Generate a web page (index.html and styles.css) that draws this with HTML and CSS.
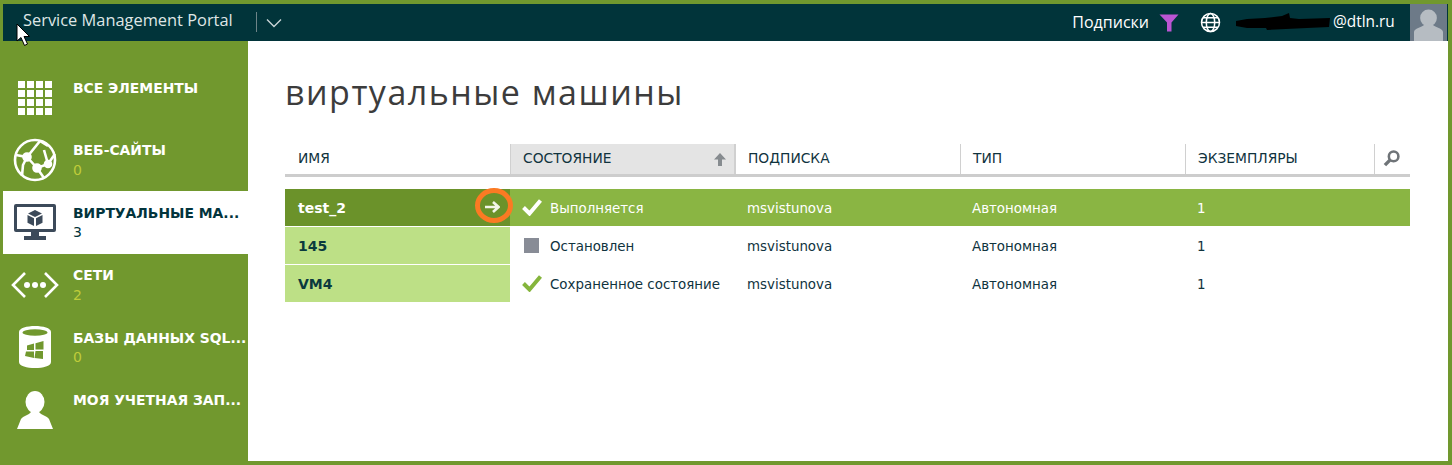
FILE: index.html
```html
<!DOCTYPE html>
<html lang="ru">
<head>
<meta charset="utf-8">
<title>Service Management Portal</title>
<link rel="stylesheet" href="styles.css">
</head>
<body>
<div class="shell">
  <header class="topbar">
    <div class="brand">Service Management Portal</div>
    <div class="brand-sep"></div>
    <svg class="chevron" width="16" height="10" viewBox="0 0 16 10"><path d="M1 1.500 8 8.500 15 1.500" fill="none" stroke="#c9d4d6" stroke-width="1.400"/></svg>
    <div class="top-right">
      <span class="subs">Подписки</span>
      <svg class="funnel" width="20" height="20" viewBox="0 0 20 20"><path d="M0.500 2.500H19.500L12.500 10.500V19.500H8V10.500Z" fill="#bb55d3"/></svg>
      <svg class="globe" width="21" height="21" viewBox="0 0 21 21" fill="none" stroke="#fff" stroke-width="1.500"><circle cx="10.500" cy="10.500" r="9"/><ellipse cx="10.500" cy="10.500" rx="4.200" ry="9"/><path d="M1.500 10.500H19.500M3 5.800H18M3 15.200H18"/></svg>
      <span class="account">
        <svg class="redact" width="96" height="22" viewBox="0 0 96 22"><path d="M1 9 12 7 30 6 47 4 54 1 55 6 64 7 95 6 94 15 72 16 32 18 31 16 12 16 1 14Z" fill="#000"/></svg>
        <span class="mail">@dtln.ru</span>
      </span>
      <div class="avatar">
        <svg width="37" height="37" viewBox="0 0 37 37"><rect width="37" height="37" fill="#6d7a88"/><circle cx="18.500" cy="14" r="8.400" fill="#b6bcc2"/><path d="M4 37V28C4 24.500 12 23 14 21H23C25 23 33 24.500 33 28V37Z" fill="#b6bcc2"/></svg>
      </div>
    </div>
  </header>
  <div class="main">
    <nav class="sidebar">
      <a class="nav-item">
        <span class="nav-icon">
          <svg width="34" height="34" viewBox="0 0 34 34" fill="#fff"><path d="M0 0h7v7H0zM9 0h7v7H9zM18 0h7v7h-7zM27 0h7v7h-7zM0 9h7v7H0zM9 9h7v7H9zM18 9h7v7h-7zM27 9h7v7h-7zM0 18h7v7H0zM9 18h7v7H9zM18 18h7v7h-7zM27 18h7v7h-7zM0 27h7v7H0zM9 27h7v7H9zM18 27h7v7h-7zM27 27h7v7h-7z"/></svg>
        </span>
        <span class="nav-text"><span class="nav-title">ВСЕ ЭЛЕМЕНТЫ</span></span>
      </a>
      <a class="nav-item">
        <span class="nav-icon">
          <svg width="44" height="44" viewBox="0 0 44 44" fill="none" stroke="#fff" stroke-width="2.600"><circle cx="22" cy="22" r="20"/><path d="M3 17 14 19 27 3M14 19 24 30 31 40M24 30 35 26 42 16M27 3 35 8M9 38 10 27 14 19M35 26 31 12"/><circle cx="14" cy="19" r="3.500" fill="#fff"/><circle cx="24" cy="30" r="3.500" fill="#fff"/><circle cx="35" cy="26" r="3" fill="#fff"/></svg>
        </span>
        <span class="nav-text"><span class="nav-title">ВЕБ-САЙТЫ</span><span class="nav-count">0</span></span>
      </a>
      <a class="nav-item is-active">
        <span class="nav-icon">
          <svg width="42" height="36" viewBox="0 0 42 36"><path d="M2 0H40A2 2 0 0 1 42 2V26A2 2 0 0 1 40 28H2A2 2 0 0 1 0 26V2A2 2 0 0 1 2 0ZM3 3V25H39V3Z" fill="#3c4a5a" fill-rule="evenodd"/><path d="M17 28H25V32H32V36H10V32H17Z" fill="#3c4a5a"/><path d="M21 6 28 9.500 21 13 14 9.500ZM13.500 11 20 14.300V22L13.500 18.700ZM28.500 11V18.700L22 22V14.300Z" fill="#3c4a5a"/></svg>
        </span>
        <span class="nav-text"><span class="nav-title">ВИРТУАЛЬНЫЕ МА...</span><span class="nav-count">3</span></span>
      </a>
      <a class="nav-item">
        <span class="nav-icon">
          <svg width="48" height="28" viewBox="0 0 48 28"><path d="M14 2 2 14 14 26M34 2 46 14 34 26" fill="none" stroke="#fff" stroke-width="2.600"/><circle cx="16" cy="14" r="3" fill="#fff"/><circle cx="24" cy="14" r="3" fill="#fff"/><circle cx="32" cy="14" r="3" fill="#fff"/></svg>
        </span>
        <span class="nav-text"><span class="nav-title">СЕТИ</span><span class="nav-count">2</span></span>
      </a>
      <a class="nav-item">
        <span class="nav-icon">
          <svg width="32" height="42" viewBox="0 0 32 42"><path d="M0 6C0 2 8 0 16 0S32 2 32 6V36C32 40 24 42 16 42S0 40 0 36Z" fill="#fff"/><ellipse cx="16" cy="6.500" rx="12.500" ry="3.200" fill="#71982e"/><path d="M8 19.500 15 17.500V24H8ZM16.500 17.200 24.500 15V23.500H16.500ZM7 25.500H15V32L6 30ZM16.500 25H24V33L15.500 32Z" fill="#71982e"/></svg>
        </span>
        <span class="nav-text"><span class="nav-title">БАЗЫ ДАННЫХ SQL...</span><span class="nav-count">0</span></span>
      </a>
      <a class="nav-item">
        <span class="nav-icon">
          <svg width="36" height="38" viewBox="0 0 36 38"><ellipse cx="18" cy="11" rx="9.500" ry="11" fill="#fff"/><path d="M0 38 4 28C6 25 12 24 14 21H22C24 24 30 25 32 28L36 38Z" fill="#fff"/></svg>
        </span>
        <span class="nav-text"><span class="nav-title">МОЯ УЧЕТНАЯ ЗАП...</span></span>
      </a>
    </nav>
    <main class="content">
      <h1 class="page-title">виртуальные машины</h1>
      <div class="grid-head">
        <div class="hcell">ИМЯ</div>
        <div class="hcell is-sorted">СОСТОЯНИЕ
          <svg class="sort-arrow" width="12" height="13" viewBox="0 0 12 13"><path d="M6 0 12 6.500H8V13H4V6.500H0Z" fill="#868b8f"/></svg>
        </div>
        <div class="hcell">ПОДПИСКА</div>
        <div class="hcell">ТИП</div>
        <div class="hcell hcell-last">ЭКЗЕМПЛЯРЫ</div>
        <div class="hsearch">
          <svg width="17" height="17" viewBox="0 0 16 16" fill="none"><circle cx="10" cy="6" r="4.500" stroke="#6f7478" stroke-width="2.400"/><path d="M6.500 9.500 1.800 14.200" stroke="#6f7478" stroke-width="3.200"/></svg>
        </div>
      </div>
      <div class="rows">
        <div class="row is-selected">
          <div class="cell-name">test_2<span class="go-arrow"><svg width="16" height="12" viewBox="0 0 16 12"><path d="M1 6H14M9 1 14.500 6 9 11" fill="none" stroke="#f2f5e8" stroke-width="2.600"/></svg></span><span class="ring"></span></div>
          <div class="cell cell-status"><svg class="status-icon" width="20" height="17" viewBox="0 0 20 17"><path d="M1.500 8.500 7.500 14.500 18.500 1.500" fill="none" stroke="#fff" stroke-width="4"/></svg><span class="cell-label">Выполняется</span></div>
          <div class="cell"><span class="cell-label">msvistunova</span></div>
          <div class="cell"><span class="cell-label">Автономная</span></div>
          <div class="cell"><span class="cell-label">1</span></div>
        </div>
        <div class="row">
          <div class="cell-name">145</div>
          <div class="cell cell-status"><span class="status-stop"></span><span class="cell-label">Остановлен</span></div>
          <div class="cell"><span class="cell-label">msvistunova</span></div>
          <div class="cell"><span class="cell-label">Автономная</span></div>
          <div class="cell"><span class="cell-label">1</span></div>
        </div>
        <div class="row">
          <div class="cell-name">VM4</div>
          <div class="cell cell-status"><svg class="status-icon" width="20" height="17" viewBox="0 0 20 17"><path d="M1.500 8.500 7.500 14.500 18.500 1.500" fill="none" stroke="#85b53c" stroke-width="4"/></svg><span class="cell-label">Сохраненное состояние</span></div>
          <div class="cell"><span class="cell-label">msvistunova</span></div>
          <div class="cell"><span class="cell-label">Автономная</span></div>
          <div class="cell"><span class="cell-label">1</span></div>
        </div>
      </div>
    </main>
  </div>
</div>
<svg class="cursor" width="15" height="24" viewBox="0 0 15 24"><path d="M1 1V18L5 14.500 8.500 22.500 11.500 21 8 13.500H13.500Z" fill="#fff" stroke="#000" stroke-width="1"/></svg>
</body>
</html>
```
FILE: styles.css
```css
* { box-sizing: border-box; }
html, body { margin: 0; height: 100%; }
body {
  width: 1452px;
  height: 465px;
  overflow: hidden;
  background: #71982e;
  font-family: "DejaVu Sans", Verdana, sans-serif;
  position: relative;
}
.shell {
  height: 465px;
  padding: 4px 4px 4px 3px;
  display: flex;
  flex-direction: column;
}
.topbar {
  height: 37px;
  flex: none;
  background: #01343a;
  display: flex;
  align-items: center;
  color: #fff;
}
.brand {
  margin-left: 20px;
  font-family: "Open Sans", sans-serif;
  font-size: 16.400px;
  color: #dfe6e6;
  position: relative;
  top: -3px;
  width: 233px;
  white-space: nowrap;
}
.brand-sep { width: 1px; height: 20px; background: #6e8488; margin-top: -1px; }
.chevron { margin-left: 9px; margin-top: 1px; }
.top-right {
  margin-left: auto;
  display: flex;
  align-items: center;
  height: 100%;
}
.subs { font-family: "Open Sans", sans-serif; font-size: 16px; margin-top: -2px; }
.funnel { margin-left: 10px; margin-top: -2px; }
.globe { margin-left: 21px; }
.account { display: flex; align-items: center; margin-left: 14px; width: 175px; }
.redact { flex: none; }
.mail { font-family: "Open Sans", sans-serif; font-size: 15.400px; margin-left: 2px; margin-top: -2px; }
.avatar { width: 38px; height: 37px; }
.avatar svg { display: block; }
.main { flex: 1; display: flex; min-height: 0; }
.sidebar {
  width: 245px;
  flex: none;
  padding-top: 25.600px;
  display: flex;
  flex-direction: column;
}
.nav-item {
  height: 62.400px;
  flex: none;
  display: flex;
  align-items: flex-start;
  color: #fff;
}
.nav-icon {
  width: 70px;
  height: 62px;
  flex: none;
  display: flex;
  align-items: center;
  justify-content: center;
  padding-right: 6px;
}
.nav-text {
  display: flex;
  flex-direction: column;
  padding-top: 14.400px;
  white-space: nowrap;
}
.nav-title { font-size: 13.900px; font-weight: 700; line-height: 15px; }
.nav-count { font-size: 14px; line-height: 16px; margin-top: 3.600px; color: #bfcc3a; }
.is-active { background: #fff; color: #02343c; }
.is-active .nav-count { color: #02343c; }
.content {
  flex: 1;
  background: #fff;
  padding: 0 38px 0 37px;
}
.page-title {
  margin: 28px 0 0;
  font-family: "Open Sans", sans-serif;
  font-weight: 400;
  font-size: 34px;
  line-height: 46px;
  letter-spacing: 1.480px;
  color: #3c3c3c;
}
.grid-head {
  margin-top: 29px;
  display: flex;
  height: 33px;
  border-bottom: 3px solid #cdcdcd;
}
.hcell {
  width: 225px;
  flex: none;
  font-size: 13.800px;
  color: #10333e;
  padding: 6px 0 0 12px;
  border-left: 1px solid #d0d0d0;
  position: relative;
}
.hcell:first-child { border-left: 0; padding-left: 13px; }
.hcell-last { width: 189px; }
.is-sorted { background: #e4e4e4; border-right: 1px solid #d0d0d0; }
.sort-arrow { position: absolute; right: 8px; top: 9px; }
.hsearch {
  flex: 1;
  border-left: 1px solid #d0d0d0;
  display: flex;
  justify-content: center;
  padding-top: 6px;
  padding-right: 2px;
}
.rows { margin-top: 12px; display: flex; flex-direction: column; gap: 1px; }
.row {
  height: 37px;
  display: flex;
  align-items: center;
  color: #10333e;
  font-size: 13.400px;
}
.cell-name {
  width: 225px;
  height: 100%;
  flex: none;
  background: #bde086;
  font-weight: 700;
  font-size: 14px;
  padding-left: 13px;
  display: flex;
  align-items: center;
  color: #0a3a3e;
  position: relative;
}
.cell { width: 225px; flex: none; padding-left: 12px; white-space: nowrap; }
.cell-label { display: block; padding-top: 2px; }
.cell-status { display: flex; align-items: center; }
.status-icon { margin-right: 8px; flex: none; }
.status-stop { width: 15px; height: 15px; background: #888c96; margin: 0 11px 0 2px; flex: none; }
.is-selected { background: #8ab543; color: #fff; }
.is-selected .cell-name { background: #6b922a; color: #fff; }
.go-arrow { position: absolute; right: 10px; top: 12px; line-height: 0; }
.ring {
  position: absolute;
  right: -3px;
  top: -1px;
  width: 38px;
  height: 35px;
  border: 5px solid #fb7a23;
  border-radius: 50%;
}
.cursor { position: absolute; left: 16px; top: 23px; }
```
